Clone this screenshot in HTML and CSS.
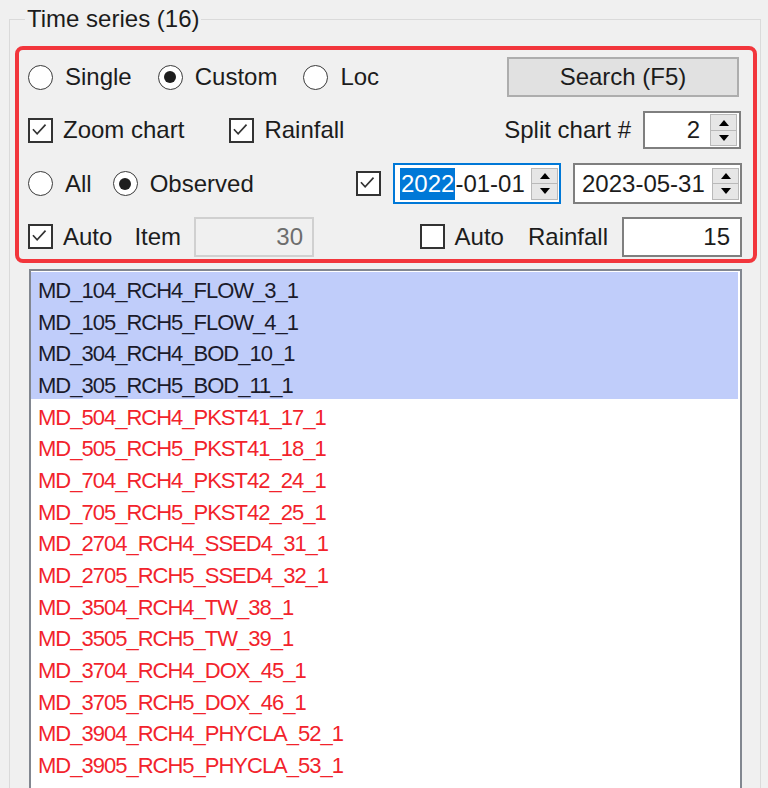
FILE: index.html
```html
<!DOCTYPE html>
<html>
<head>
<meta charset="utf-8">
<title>Time series</title>
<link rel="stylesheet" href="styles.css">
</head>
<body>
<fieldset class="group">
  <legend class="group-title">Time series (16)</legend>
  <div class="options">
    <div class="row">
      <label class="opt"><span class="radio"></span><span class="lbl">Single</span></label>
      <label class="opt ml26"><span class="radio on"></span><span class="lbl">Custom</span></label>
      <label class="opt ml26"><span class="radio"></span><span class="lbl">Loc</span></label>
      <button class="btn push">Search (F5)</button>
    </div>
    <div class="row">
      <label class="opt"><span class="check"><svg viewBox="0 0 25 25" width="21" height="21"><path d="M3.5 11 L8.5 16.5 L18.5 5.5" fill="none" stroke="#333" stroke-width="2"/></svg></span><span class="lbl cl">Zoom chart</span></label>
      <label class="opt ml45"><span class="check"><svg viewBox="0 0 25 25" width="21" height="21"><path d="M3.5 11 L8.5 16.5 L18.5 5.5" fill="none" stroke="#333" stroke-width="2"/></svg></span><span class="lbl cl">Rainfall</span></label>
      <span class="lbl push">Split chart #</span>
      <div class="field spinbox ml12">
        <span class="val">2</span>
        <span class="spin"><span class="spin-btn"><i class="up"></i></span><span class="spin-btn"><i class="down"></i></span></span>
      </div>
    </div>
    <div class="row">
      <label class="opt"><span class="radio"></span><span class="lbl">All</span></label>
      <label class="opt ml21"><span class="radio on"></span><span class="lbl">Observed</span></label>
      <span class="check push"><svg viewBox="0 0 25 25" width="21" height="21"><path d="M3.5 11 L8.5 16.5 L18.5 5.5" fill="none" stroke="#333" stroke-width="2"/></svg></span>
      <div class="field date focus ml12">
        <span class="dval"><span class="hl">2022</span>-01-01</span>
        <span class="spin"><span class="spin-btn"><i class="up"></i></span><span class="spin-btn"><i class="down"></i></span></span>
      </div>
      <div class="field date ml12 mrn1">
        <span class="dval">2023-05-31</span>
        <span class="spin"><span class="spin-btn"><i class="up"></i></span><span class="spin-btn"><i class="down"></i></span></span>
      </div>
    </div>
    <div class="row">
      <label class="opt"><span class="check"><svg viewBox="0 0 25 25" width="21" height="21"><path d="M3.5 11 L8.5 16.5 L18.5 5.5" fill="none" stroke="#333" stroke-width="2"/></svg></span><span class="lbl cl">Auto</span></label>
      <span class="lbl ml22">Item</span>
      <div class="field text disabled ml13"><span class="val">30</span></div>
      <span class="check push"></span>
      <span class="lbl cl">Auto</span>
      <span class="lbl ml24">Rainfall</span>
      <div class="field text ml14 mrn1"><span class="val">15</span></div>
    </div>
  </div>
  <div class="list">
    <div class="item sel">MD_104_RCH4_FLOW_3_1</div>
    <div class="item sel">MD_105_RCH5_FLOW_4_1</div>
    <div class="item sel">MD_304_RCH4_BOD_10_1</div>
    <div class="item sel">MD_305_RCH5_BOD_11_1</div>
    <div class="item red">MD_504_RCH4_PKST41_17_1</div>
    <div class="item red">MD_505_RCH5_PKST41_18_1</div>
    <div class="item red">MD_704_RCH4_PKST42_24_1</div>
    <div class="item red">MD_705_RCH5_PKST42_25_1</div>
    <div class="item red">MD_2704_RCH4_SSED4_31_1</div>
    <div class="item red">MD_2705_RCH5_SSED4_32_1</div>
    <div class="item red">MD_3504_RCH4_TW_38_1</div>
    <div class="item red">MD_3505_RCH5_TW_39_1</div>
    <div class="item red">MD_3704_RCH4_DOX_45_1</div>
    <div class="item red">MD_3705_RCH5_DOX_46_1</div>
    <div class="item red">MD_3904_RCH4_PHYCLA_52_1</div>
    <div class="item red">MD_3905_RCH5_PHYCLA_53_1</div>
  </div>
</fieldset>
</body>
</html>
```
FILE: styles.css
```css
html, body {
  height: 788px;
  overflow: hidden;
}
body {
  margin: 0;
  padding: 5px 7px 0 9px;
  background: #f0f0f0;
  font-family: "Liberation Sans", Arial, sans-serif;
  font-size: 24px;
  color: #1c1c1c;
}
.group {
  margin: 0;
  padding: 0;
  border: 1px solid #dadada;
  min-width: 0;
  height: 900px;
  box-sizing: border-box;
}
.group-title {
  margin-left: 15px;
  padding: 0 2px;
  line-height: 28px;
}
.options {
  margin: 13px 3px 0 5px;
  border: 4px solid #f2363c;
  border-radius: 8px;
  padding: 7px 12px 2px 9px;
  display: flex;
  flex-direction: column;
  gap: 13.33px;
}
.row {
  display: flex;
  align-items: center;
  height: 40px;
}
.opt {
  display: flex;
  align-items: center;
}
.lbl {
  margin-left: 12px;
  white-space: nowrap;
}
.lbl.cl { margin-left: 10px; }
.row > .lbl { margin-left: 0; }
.row > .lbl.cl { margin-left: 10px; }
.push { margin-left: auto !important; }
.ml12 { margin-left: 12px; }
.ml13 { margin-left: 13px; }
.ml14 { margin-left: 14px; }
.ml21 { margin-left: 21px; }
.ml22 { margin-left: 22px !important; }
.ml24 { margin-left: 24px !important; }
.ml26 { margin-left: 26px; }
.ml45 { margin-left: 45px; }
.mrn1 { margin-right: -1px; }

.radio {
  width: 25px;
  height: 25px;
  box-sizing: border-box;
  border: 1.5px solid #3a3a3a;
  border-radius: 50%;
  background: #fff;
  display: flex;
  align-items: center;
  justify-content: center;
  flex: none;
}
.radio.on::after {
  content: "";
  width: 12px;
  height: 12px;
  border-radius: 50%;
  background: #1e1e1e;
}
.check {
  width: 25px;
  height: 25px;
  box-sizing: border-box;
  border: 2px solid #333;
  background: #fff;
  display: flex;
  align-items: center;
  justify-content: center;
  flex: none;
}
.btn {
  margin-right: 2px;
  width: 232px;
  height: 40px;
  background: #e1e1e1;
  border: 2px solid #adadad;
  font-family: inherit;
  font-size: 24px;
  color: #1c1c1c;
  padding: 0;
}
.field {
  box-sizing: border-box;
  height: 40px;
  border: 2px solid #7f7f7f;
  background: #fff;
  display: flex;
  align-items: center;
  flex: none;
}
.spinbox {
  width: 98px;
  height: 38px;
  padding-right: 2px;
}
.spinbox .val {
  flex: 1;
  text-align: right;
  padding-right: 10px;
}
.date {
  width: 168px;
  height: 41px;
  padding-left: 5px;
  padding-right: 1px;
}
.date + .date { width: 169px; }
.date + .date .dval { padding-left: 2px; }
.date.focus { border-color: #0078d7; }
.dval {
  flex: 1;
  white-space: nowrap;
}
.hl {
  display: inline-block;
  background: #0078d7;
  color: #fff;
  line-height: 32px;
  padding: 0 1px 0 1px;
}
.spin {
  display: flex;
  flex-direction: column;
  width: 27px;
  height: 32px;
  flex: none;
}
.spin-btn {
  flex: 1;
  background: #e6e6e6;
  border: 1px solid #b9b9b9;
  display: flex;
  align-items: center;
  justify-content: center;
}
.spin-btn + .spin-btn { border-top: none; }
.up {
  width: 0;
  height: 0;
  border-left: 5px solid transparent;
  border-right: 5px solid transparent;
  border-bottom: 6px solid #000;
}
.down {
  width: 0;
  height: 0;
  border-left: 5px solid transparent;
  border-right: 5px solid transparent;
  border-top: 6px solid #000;
}
.text {
  width: 120px;
  justify-content: flex-end;
  padding-right: 10px;
}
.text.disabled {
  background: #f0f0f0;
  border-color: #d0d0d0;
  color: #6d6d6d;
  padding-right: 9px;
}
.list {
  margin: 6px 18px 0 19px;
  border: 2px solid #828790;
  background: #fff;
  padding-top: 1px;
  height: 700px;
}
.item {
  height: 25.67px;
  padding: 6px 0 0 7px;
  line-height: 25px;
  font-size: 22px;
  letter-spacing: -1px;
  white-space: nowrap;
}
.item.sel {
  background: #c0cdfa;
  color: #1b1b2b;
  margin-right: 2px;
}
.item.red {
  color: #f2232c;
}
```
